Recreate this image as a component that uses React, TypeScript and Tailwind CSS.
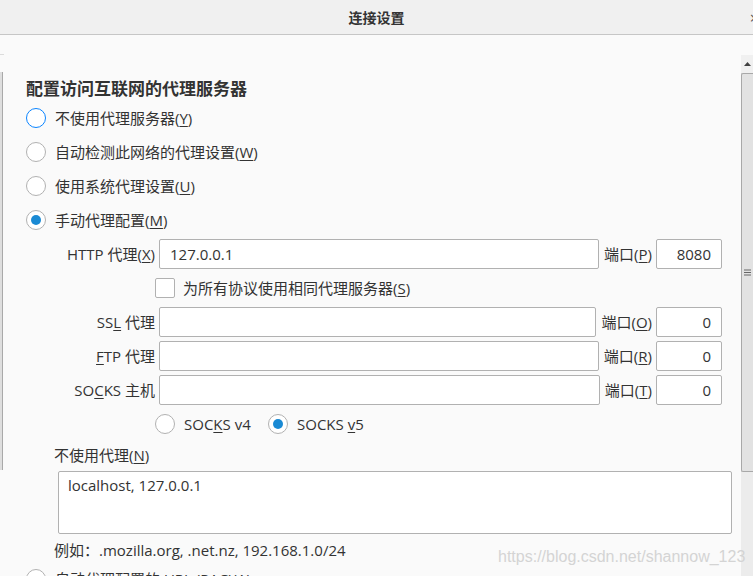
import React from "react";

const FONT = { fontFamily: '"Open Sans","Noto Sans CJK SC",sans-serif' };

function U({ c }: { c: string }) {
  return <span className="underline underline-offset-2 decoration-1">{c}</span>;
}

function Radio({ checked, focus }: { checked?: boolean; focus?: boolean }) {
  return (
    <div
      className={`w-[20px] h-[20px] rounded-full bg-white flex items-center justify-center shrink-0 border ${
        focus ? "border-[#0a84ff] border-[1.5px]" : "border-[#b1b1b1]"
      }`}
    >
      {checked && <div className="w-[10px] h-[10px] rounded-full bg-[#1a8ad4]" />}
    </div>
  );
}

function ProxyRow({
  label,
  value,
  portLabel,
  port,
}: {
  label: React.ReactNode;
  value: string;
  portLabel: React.ReactNode;
  port: string;
}) {
  return (
    <div className="h-[34px] flex items-center pr-[19px]">
      <div className="w-[133px] text-right whitespace-nowrap pr-[4px]">{label}</div>
      <div className="flex-1 h-[30px] bg-white border border-[#b1b1b1] rounded-[2px] flex items-center pl-[10px]">
        {value}
      </div>
      <div className="ml-[5px] mr-[4px] whitespace-nowrap">{portLabel}</div>
      <div className="w-[66px] h-[30px] bg-white border border-[#b1b1b1] rounded-[2px] flex items-center justify-end pr-[10px]">
        {port}
      </div>
    </div>
  );
}

export default function App() {
  return (
    <div className="w-[753px] h-[576px] overflow-hidden relative bg-[#fafafa] text-[#333] text-[15px]" style={FONT}>
      {/* title bar */}
      <div className="h-[35px] bg-[#f0f0f0] border-b border-[#c6c6c6] flex items-center justify-center relative">
        <span className="text-[14px] font-semibold text-[#333]">连接设置</span>
        <span className="absolute right-[-6px] top-[6px] text-[16px] text-[#555]">×</span>
      </div>

      {/* left edge of underlying frame */}
      <div className="absolute left-0 top-[54px] w-[4px] h-[1px] bg-[#dcdcdc]" />
      <div className="absolute left-0 top-[72px] w-[3px] h-[398px] bg-[#dedede] border-r border-[#a9a9a9]" />

      <div className="flex h-[541px]">
        {/* content */}
        <div className="flex-1 pl-[26px] pt-[42px]">
          <div className="h-[24px] leading-[24px] text-[17px] font-bold text-[#333]">配置访问互联网的代理服务器</div>

          <div className="h-[34px] flex items-center gap-[9px]">
            <Radio focus />
            <span>
              不使用代理服务器(<U c="Y" />)
            </span>
          </div>
          <div className="h-[34px] flex items-center gap-[9px]">
            <Radio />
            <span>
              自动检测此网络的代理设置(<U c="W" />)
            </span>
          </div>
          <div className="h-[34px] flex items-center gap-[9px]">
            <Radio />
            <span>
              使用系统代理设置(<U c="U" />)
            </span>
          </div>
          <div className="h-[34px] flex items-center gap-[9px]">
            <Radio checked />
            <span>
              手动代理配置(<U c="M" />)
            </span>
          </div>

          <ProxyRow
            label={
              <>
                HTTP 代理(<U c="X" />)
              </>
            }
            value="127.0.0.1"
            portLabel={
              <>
                端口(<U c="P" />)
              </>
            }
            port="8080"
          />

          <div className="h-[34px] flex items-center pl-[129px]">
            <div className="w-[20px] h-[20px] bg-white border border-[#b1b1b1] rounded-[2px]" />
            <span className="ml-[8px]">
              为所有协议使用相同代理服务器(<U c="S" />)
            </span>
          </div>

          <ProxyRow
            label={
              <>
                SS<U c="L" /> 代理
              </>
            }
            value=""
            portLabel={
              <>
                端口(<U c="O" />)
              </>
            }
            port="0"
          />
          <ProxyRow
            label={
              <>
                <U c="F" />TP 代理
              </>
            }
            value=""
            portLabel={
              <>
                端口(<U c="R" />)
              </>
            }
            port="0"
          />
          <ProxyRow
            label={
              <>
                SO<U c="C" />KS 主机
              </>
            }
            value=""
            portLabel={
              <>
                端口(<U c="T" />)
              </>
            }
            port="0"
          />

          <div className="h-[34px] flex items-center pl-[129px]">
            <Radio />
            <span className="ml-[9px] w-[84px]">
              SOC<U c="K" />S v4
            </span>
            <Radio checked />
            <span className="ml-[9px]">
              SOCKS <U c="v" />5
            </span>
          </div>

          <div className="h-[28px] flex items-center pl-[28px]">
            <span>
              不使用代理(<U c="N" />)
            </span>
          </div>
          <div className="mt-[2px] ml-[32px] mr-[9px] h-[63px] bg-white border border-[#b1b1b1] rounded-[2px] pl-[9px] pt-[2px]">
            localhost, 127.0.0.1
          </div>
          <div className="mt-[4px] h-[24px] leading-[24px] pl-[28px]">例如：.mozilla.org, .net.nz, 192.168.1.0/24</div>

          <div className="h-[34px] flex items-center gap-[9px]">
            <Radio />
            <span>
              自动代理配置的 URL (PAC)(<U c="A" />)
            </span>
          </div>
        </div>

        {/* scrollbar */}
        <div className="w-[12px] mt-[20px] flex flex-col bg-[#ececec]">
          <div className="h-[18px] bg-[#f0f0f0] flex items-center justify-center">
            <svg width="7" height="4" viewBox="0 0 7 4">
              <path d="M0 4 L3.5 0 L7 4 Z" fill="#404040" />
            </svg>
          </div>
          <div className="h-[399px] bg-[#e2e2e2] border-l border-t border-b border-[#a8a8a8] rounded-tl-[2px] rounded-bl-[2px] flex items-center justify-center">
            <svg width="7" height="7" viewBox="0 0 7 7">
              <path d="M0 1 H7 M0 3.5 H7 M0 6 H7" stroke="#666" strokeWidth="1" />
            </svg>
          </div>
        </div>
      </div>

      {/* watermark */}
      <div
        className="absolute left-[498px] top-[545px] text-[16px] text-[#d4d4d4] whitespace-nowrap"
        style={{ fontFamily: '"Liberation Sans",Arial,sans-serif' }}
      >
        https://blog.csdn.net/shannow_123
      </div>
    </div>
  );
}
